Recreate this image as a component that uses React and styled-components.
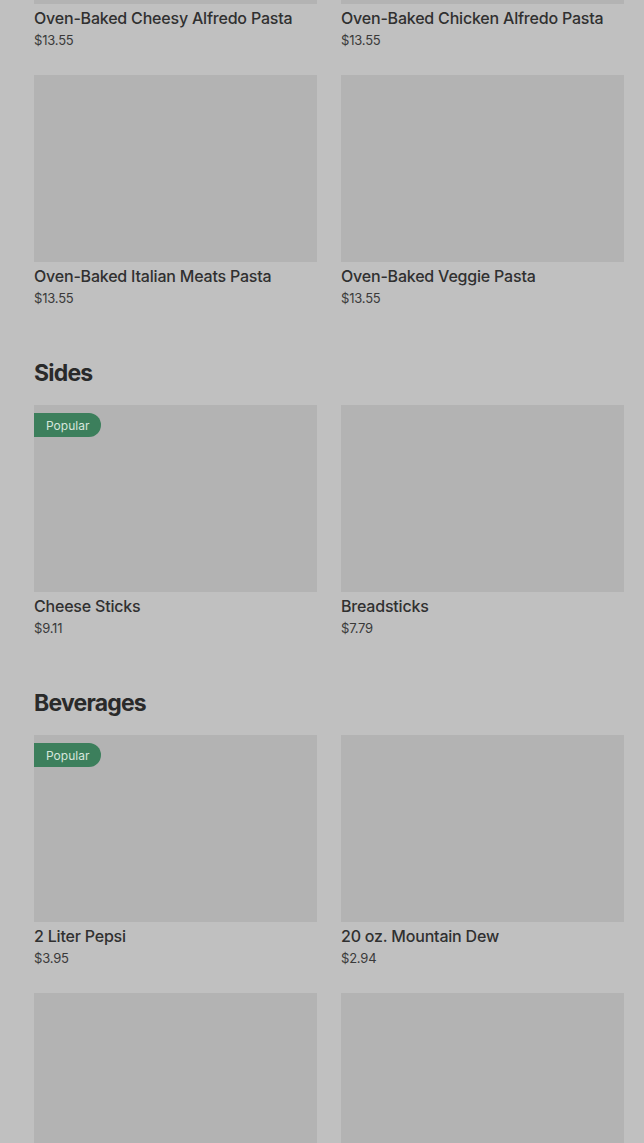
import React from 'react';
import styled, { createGlobalStyle } from 'styled-components';

const GlobalStyle = createGlobalStyle`
  html, body {
    margin: 0;
    padding: 0;
    background: #c0c0c0;
    overflow: hidden;
  }
  body {
    font-family: Inter, "Noto Sans", "Liberation Sans", sans-serif;
    color: #2e2e2e;
  }
`;

const Page = styled.div`
  width: 644px;
  height: 1143px;
  overflow: hidden;
  background: #c0c0c0;
`;

const Menu = styled.div`
  margin-top: -183px;
  padding: 0 20px 0 34px;
  display: flex;
  flex-direction: column;
  gap: 48px;
`;

const Section = styled.section`
  display: flex;
  flex-direction: column;
`;

const Heading = styled.h2`
  margin: 0 0 17px;
  padding-top: 1px;
  height: 31px;
  font-size: 23px;
  line-height: 32px;
  font-weight: 700;
  letter-spacing: -0.8px;
  color: #2a2a2a;
`;

const Grid = styled.div`
  display: grid;
  grid-template-columns: 283px 283px;
  column-gap: 24px;
  row-gap: 25px;
`;

const Card = styled.div`
  display: flex;
  flex-direction: column;
`;

const Thumb = styled.div`
  position: relative;
  height: 187px;
  background: #b3b3b3;
`;

const Badge = styled.span`
  position: absolute;
  top: 8px;
  left: 0;
  height: 24px;
  padding: 0 12px;
  display: flex;
  align-items: center;
  background: #3c7f5c;
  color: #d6e6dc;
  font-size: 12px;
  border-radius: 0 12px 12px 0;
`;

const Name = styled.div`
  margin-top: 2px;
  font-size: 16px;
  line-height: 24px;
  font-weight: 500;
  letter-spacing: -0.2px;
  color: #303030;
`;

const Price = styled.div`
  font-size: 13px;
  line-height: 20px;
  letter-spacing: -0.2px;
  color: #3a3a3a;
`;

const sections = [
  {
    title: null,
    items: [
      { name: 'Oven-Baked Cheesy Alfredo Pasta', price: '$13.55' },
      { name: 'Oven-Baked Chicken Alfredo Pasta', price: '$13.55' },
      { name: 'Oven-Baked Italian Meats Pasta', price: '$13.55' },
      { name: 'Oven-Baked Veggie Pasta', price: '$13.55' },
    ],
  },
  {
    title: 'Sides',
    items: [
      { name: 'Cheese Sticks', price: '$9.11', popular: true },
      { name: 'Breadsticks', price: '$7.79' },
    ],
  },
  {
    title: 'Beverages',
    items: [
      { name: '2 Liter Pepsi', price: '$3.95', popular: true },
      { name: '20 oz. Mountain Dew', price: '$2.94' },
      { name: '', price: '' },
      { name: '', price: '' },
    ],
  },
];

export default function App() {
  return (
    <Page>
      <GlobalStyle />
      <Menu>
        {sections.map((s, i) => (
          <Section key={i}>
            {s.title && <Heading>{s.title}</Heading>}
            <Grid>
              {s.items.map((it, j) => (
                <Card key={j}>
                  <Thumb>{it.popular && <Badge>Popular</Badge>}</Thumb>
                  <Name>{it.name}</Name>
                  <Price>{it.price}</Price>
                </Card>
              ))}
            </Grid>
          </Section>
        ))}
      </Menu>
    </Page>
  );
}
